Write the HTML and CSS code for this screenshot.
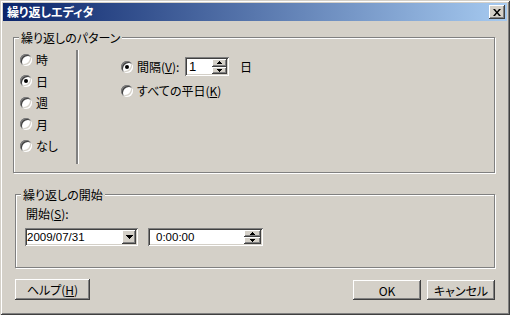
FILE: index.html
```html
<!DOCTYPE html>
<html lang="ja">
<head>
    <meta charset="UTF-8">
    <title>繰り返しエディタ</title>
    <link rel="stylesheet" href="styles.css">
</head>
<body>

<div class="window">
    <div class="titlebar">
        <span class="title">繰り返しエディタ</span>
        <span class="close">
            <svg width="8" height="7" viewBox="0 0 8 7"><path d="M0 0h2l2 2.5L6 0h2L5 3.5 8 7H6L4 4.5 2 7H0l3-3.5z" fill="#000"/></svg>
        </span>
    </div>

    <div class="content">
        <!-- 繰り返しのパターン -->
        <div class="group pattern">
            <div class="group-title">繰り返しのパターン</div>
            <div class="pattern-inner">
                <div class="freq">
                    <label class="radio"><span class="dot"></span><span>時</span></label>
                    <label class="radio"><span class="dot on"></span><span>日</span></label>
                    <label class="radio"><span class="dot"></span><span>週</span></label>
                    <label class="radio"><span class="dot"></span><span>月</span></label>
                    <label class="radio"><span class="dot"></span><span>なし</span></label>
                </div>
                <div class="sep"></div>
                <div class="detail">
                    <div class="detail-row">
                        <label class="radio interval"><span class="dot on"></span><span>間隔(<u>V</u>):</span></label>
                        <div class="spin">
                            <span class="val">1</span>
                            <div class="spin-btns">
                                <span class="arrow-btn"><svg width="5" height="3"><path d="M2 0h1v1h1v1h1v1H0V2h1V1h1z"/></svg></span>
                                <span class="arrow-btn"><svg width="5" height="3"><path d="M0 0h5v1H4v1H3v1H2V2H1V1H0z"/></svg></span>
                            </div>
                        </div>
                        <span class="unit">日</span>
                    </div>
                    <div class="detail-row">
                        <label class="radio"><span class="dot"></span><span>すべての平日(<u>K</u>)</span></label>
                    </div>
                </div>
            </div>
        </div>

        <!-- 繰り返しの開始 -->
        <div class="group start">
            <div class="group-title">繰り返しの開始</div>
            <div class="start-inner">
                <div class="field-label">開始(<u>S</u>):</div>
                <div class="fields">
                    <div class="combo">
                        <span class="val">2009/07/31</span>
                        <span class="drop-btn"><svg width="7" height="4"><path d="M0 0h7v1H6v1H5v1H4v1H3V3H2V2H1V1H0z"/></svg></span>
                    </div>
                    <div class="timebox">
                        <span class="val">0:00:00</span>
                        <div class="spin-btns">
                            <span class="arrow-btn"><svg width="5" height="3"><path d="M2 0h1v1h1v1h1v1H0V2h1V1h1z"/></svg></span>
                            <span class="arrow-btn"><svg width="5" height="3"><path d="M0 0h5v1H4v1H3v1H2V2H1V1H0z"/></svg></span>
                        </div>
                    </div>
                </div>
            </div>
        </div>

        <div class="buttons">
            <span class="btn help">ヘルプ(<u>H</u>)</span>
            <div class="btn-group">
                <span class="btn">OK</span>
                <span class="btn">キャンセル</span>
            </div>
        </div>
    </div>
</div>

</body>
</html>
```

FILE: styles.css
```css
* {
    box-sizing: border-box;
}

body {
    margin: 0;
    background: #d4d0c8;
    font-family: "Noto Sans CJK JP", sans-serif;
    font-size: 12px;
    color: #000;
    font-feature-settings: "palt";
}

u {
    text-underline-offset: 1px;
}

.window {
    width: 510px;
    height: 315px;
    padding: 3px;
    background: #d4d0c8;
    box-shadow: inset 1px 1px #d4d0c8, inset -1px -1px #404040, inset 2px 2px #fff, inset -2px -2px #808080;
}

.titlebar {
    height: 18px;
    display: flex;
    align-items: center;
    justify-content: space-between;
    padding: 0 2px 0 4px;
    background: linear-gradient(to right, #0a246a, #a6caf0);
}

.title {
    color: #fff;
    font-weight: bold;
    line-height: 18px;
}

.close {
    width: 16px;
    height: 14px;
    display: flex;
    align-items: center;
    justify-content: center;
    background: #d4d0c8;
    box-shadow: inset -1px -1px #404040, inset 1px 1px #fff, inset -2px -2px #808080;
}

.content {
    padding: 16px 0 0 10px;
}

.group {
    width: 482px;
    border: 1px solid #808080;
    box-shadow: 1px 1px #fff, inset 1px 1px #fff;
}

.group-title {
    width: fit-content;
    margin: -7px 0 0 5px;
    padding: 0 2px;
    line-height: 13px;
    background: #d4d0c8;
}

.pattern {
    height: 136px;
}

.pattern-inner {
    display: flex;
    height: 127px;
}

.freq {
    width: 62px;
    padding: 5px 0 0 6px;
}

.radio {
    display: flex;
    align-items: center;
    gap: 4px;
    height: 21.5px;
    white-space: nowrap;
}

.dot {
    position: relative;
    flex-shrink: 0;
    width: 12px;
    height: 12px;
    border-radius: 50%;
    background: #fff;
    box-shadow: inset 1px 1px #808080, inset -1px -1px #fff, inset 2px 2px #404040, inset -2px -2px #d4d0c8;
}

.dot.on::after {
    content: "";
    position: absolute;
    left: 4px;
    top: 4px;
    width: 4px;
    height: 4px;
    border-radius: 50%;
    background: #000;
}

.sep {
    width: 3px;
    height: 114px;
    margin-top: 6px;
    border-left: 2px solid #808080;
    border-right: 1px solid #fff;
}

.detail {
    padding: 12px 0 0 42px;
    display: flex;
    flex-direction: column;
    gap: 3px;
}

.detail-row {
    display: flex;
    align-items: center;
    height: 21px;
}

.interval {
    width: 64px;
    flex-shrink: 0;
}

.spin {
    display: flex;
    flex-shrink: 0;
    width: 44px;
    height: 19px;
    padding: 2px;
    background: #fff;
    box-shadow: inset 1px 1px #808080, inset -1px -1px #fff, inset 2px 2px #404040, inset -2px -2px #d4d0c8;
}

.spin .val {
    flex: 1;
    padding-left: 2px;
    font-family: "Liberation Sans", sans-serif;
    font-size: 13px;
    line-height: 15px;
}

.spin-btns {
    width: 15px;
    display: flex;
    flex-direction: column;
}

.arrow-btn {
    flex: 1;
    display: flex;
    align-items: center;
    justify-content: center;
    background: #d4d0c8;
    box-shadow: inset -1px -1px #404040, inset 1px 1px #fff, inset -2px -2px #808080;
}

.unit {
    margin-left: 11px;
}

.start {
    width: 480px;
    height: 74px;
    margin: 21px 0 0 2px;
}

.start-inner {
    padding: 6px 0 0 9px;
}

.field-label {
    line-height: 13px;
    padding-left: 1px;
}

.fields {
    display: flex;
    gap: 10px;
    margin-top: 8px;
}

.combo,
.timebox {
    display: flex;
    height: 18px;
    padding: 2px;
    background: #fff;
    box-shadow: inset 1px 1px #808080, inset -1px -1px #fff, inset 2px 2px #404040, inset -2px -2px #d4d0c8;
}

.combo {
    width: 113px;
}

.timebox {
    width: 115px;
}

.combo .val,
.timebox .val {
    flex: 1;
    font-family: "Liberation Sans", sans-serif;
    font-size: 11.5px;
    line-height: 14px;
}

.timebox .val {
    padding-left: 6px;
}

.timebox .spin-btns {
    width: 17px;
}

.drop-btn {
    width: 14px;
    display: flex;
    align-items: center;
    justify-content: center;
    background: #d4d0c8;
    box-shadow: inset -1px -1px #404040, inset 1px 1px #fff, inset -2px -2px #808080;
}

.buttons {
    width: 482px;
    margin-top: 11px;
    display: flex;
    align-items: flex-end;
    justify-content: space-between;
}

.btn-group {
    display: flex;
    gap: 6px;
}

.btn {
    width: 68px;
    height: 20px;
    display: flex;
    align-items: center;
    justify-content: center;
    background: #d4d0c8;
    box-shadow: inset -1px -1px #404040, inset 1px 1px #fff, inset -2px -2px #808080;
}

.btn.help {
    width: 75px;
    height: 21px;
    margin-left: 2px;
}
```
